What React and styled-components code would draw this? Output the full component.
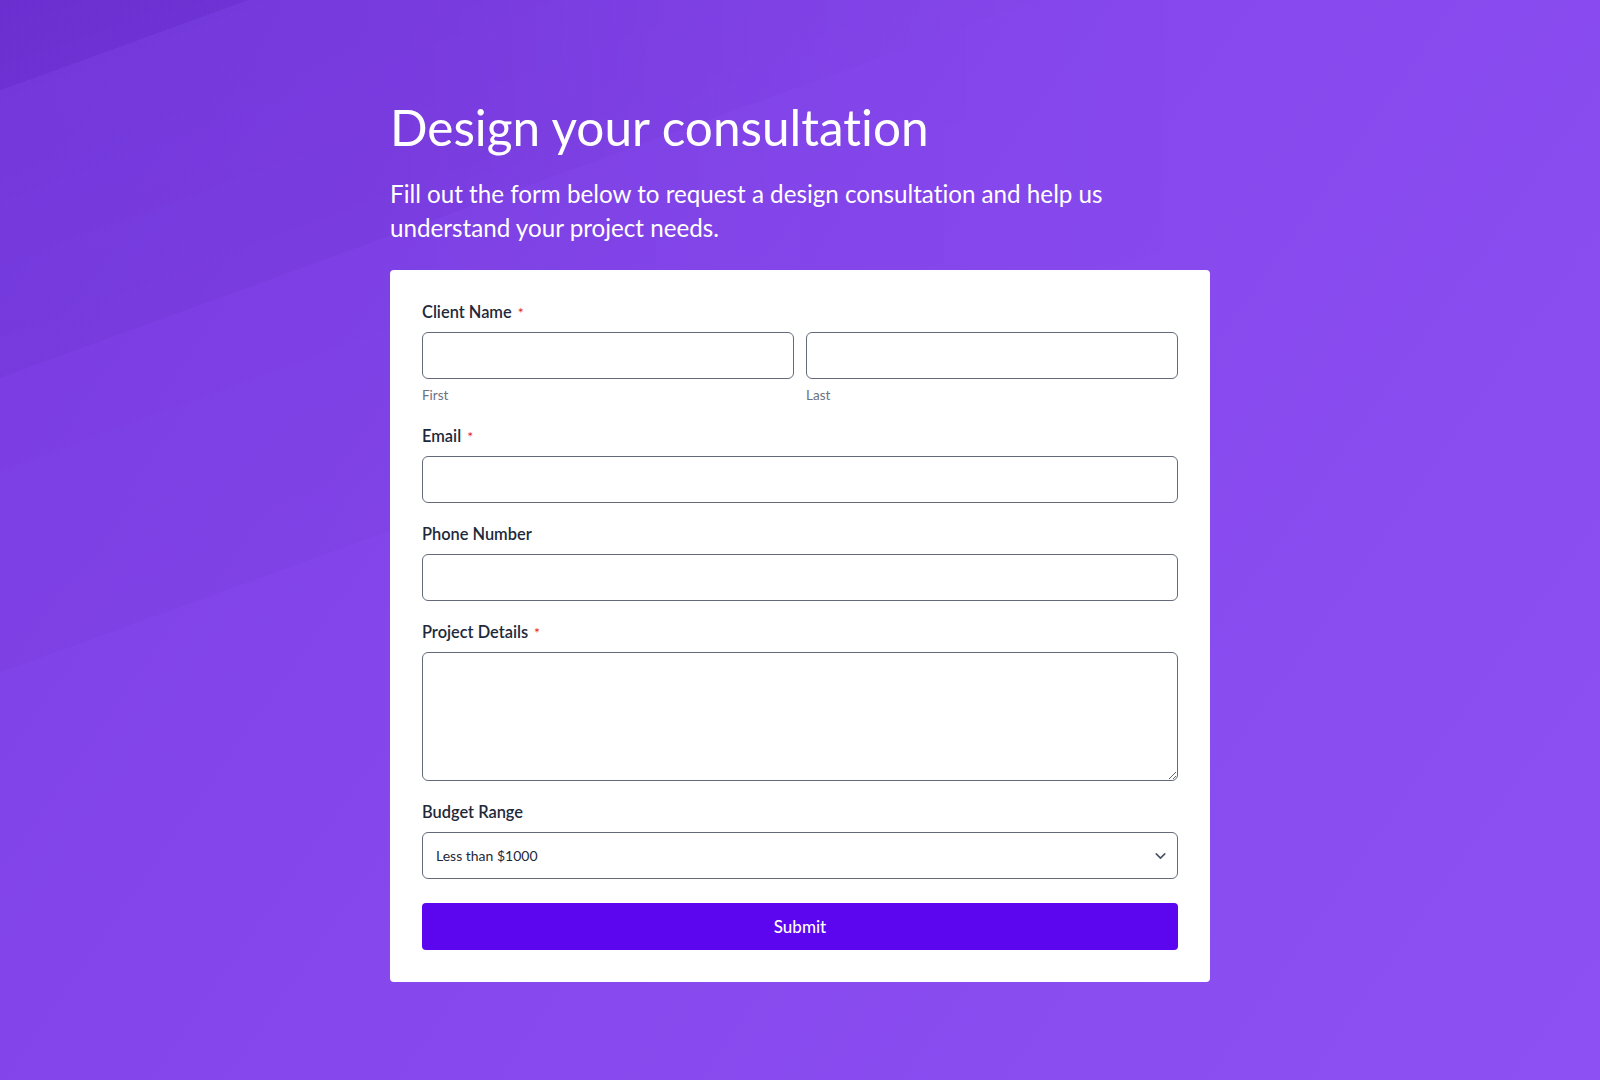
import styled, { createGlobalStyle } from 'styled-components';
import { ChevronDown } from 'lucide-react';

const GlobalStyle = createGlobalStyle`
    html, body {
        margin: 0;
        padding: 0;
    }
    body {
        font-family: 'Lato', 'Noto Sans', sans-serif;
        font-variant-ligatures: none;
        -webkit-font-smoothing: antialiased;
    }
    * {
        box-sizing: border-box;
    }
`;

const Page = styled.div`
    position: relative;
    min-height: 100vh;
    display: flex;
    flex-direction: column;
    align-items: center;
    padding: 98px 16px 80px;
    background: linear-gradient(125deg, #7b3fe4 0%, #8648ec 45%, #8c50f3 100%);

    &::before {
        content: '';
        position: absolute;
        inset: 0;
        pointer-events: none;
        background:
            linear-gradient(160deg, rgba(70, 10, 160, 0.18) 0, rgba(70, 10, 160, 0.14) 85px, transparent 85px),
            linear-gradient(160deg, rgba(70, 10, 160, 0.09) 0, rgba(70, 10, 160, 0.07) 355px, transparent 355px),
            linear-gradient(160deg, rgba(70, 10, 160, 0.06) 0, rgba(70, 10, 160, 0.04) 632px, transparent 632px);
        -webkit-mask-image: linear-gradient(to right, #000 0%, #000 25%, transparent 75%);
        mask-image: linear-gradient(to right, #000 0%, #000 25%, transparent 75%);
    }
`;

const Container = styled.div`
    position: relative;
    width: 820px;
    max-width: 100%;
`;

const Heading = styled.h1`
    margin: 0;
    font-size: 49.5px;
    line-height: 1.2;
    font-weight: 400;
    color: #ffffff;
`;

const Intro = styled.p`
    margin: 20px 0 25px;
    max-width: 760px;
    font-size: 24.2px;
    line-height: 34px;
    color: #ffffff;
`;

const Card = styled.form`
    background: #ffffff;
    border-radius: 4px;
    padding: 32px 32px 32px;
    display: flex;
    flex-direction: column;
`;

const Field = styled.div`
    display: flex;
    flex-direction: column;
    margin-bottom: ${(p) => p.$gap || 21}px;
`;

const Label = styled.label`
    display: block;
    font-size: 16.4px;
    line-height: 20px;
    font-weight: 600;
    color: #1e293b;
    margin-bottom: 10px;
`;

const Required = styled.span`
    color: #dc2626;
    font-size: 14px;
    line-height: 1;
    font-weight: 400;
    margin-left: 6px;
`;

const Row = styled.div`
    display: grid;
    grid-template-columns: 1fr 1fr;
    gap: 12px;
`;

const Part = styled.div`
    display: flex;
    flex-direction: column;
`;

const SubLabel = styled.span`
    margin-top: 7px;
    font-size: 13.5px;
    line-height: 18px;
    color: #6b7280;
`;

const Input = styled.input`
    width: 100%;
    height: 47px;
    border: 1px solid #646b78;
    border-radius: 6px;
    padding: 0 13px;
    font-family: inherit;
    font-size: 14px;
    color: #1e293b;
    background: #ffffff;
    outline: none;
`;

const TextArea = styled.textarea`
    width: 100%;
    height: 129px;
    border: 1px solid #646b78;
    border-radius: 6px;
    padding: 12px 13px;
    font-family: inherit;
    font-size: 14px;
    color: #1e293b;
    display: block;
    outline: none;
`;

const SelectWrap = styled.div`
    position: relative;

    svg {
        position: absolute;
        right: 9px;
        top: 50%;
        transform: translateY(-50%);
        color: #4b5563;
        pointer-events: none;
    }
`;

const Select = styled.select`
    width: 100%;
    height: 47px;
    appearance: none;
    border: 1px solid #646b78;
    border-radius: 6px;
    padding: 0 36px 0 13px;
    font-family: inherit;
    font-size: 14px;
    color: #1e293b;
    background: #ffffff;
    outline: none;
`;

const SubmitButton = styled.button`
    margin-top: 3px;
    height: 47px;
    width: 100%;
    border: none;
    border-radius: 4px;
    background: #5c05ef;
    color: #ffffff;
    font-family: inherit;
    font-size: 17px;
    font-weight: 500;
    cursor: pointer;
`;

export default function App() {
    return (
        <>
            <GlobalStyle />
            <Page>
                <Container>
                    <Heading>Design your consultation</Heading>
                    <Intro>
                        Fill out the form below to request a design consultation and help us understand your project needs.
                    </Intro>
                    <Card onSubmit={(e) => e.preventDefault()}>
                        <Field $gap={22}>
                            <Label>
                                Client Name<Required>*</Required>
                            </Label>
                            <Row>
                                <Part>
                                    <Input type="text" />
                                    <SubLabel>First</SubLabel>
                                </Part>
                                <Part>
                                    <Input type="text" />
                                    <SubLabel>Last</SubLabel>
                                </Part>
                            </Row>
                        </Field>
                        <Field>
                            <Label>
                                Email<Required>*</Required>
                            </Label>
                            <Input type="email" />
                        </Field>
                        <Field>
                            <Label>Phone Number</Label>
                            <Input type="tel" />
                        </Field>
                        <Field>
                            <Label>
                                Project Details<Required>*</Required>
                            </Label>
                            <TextArea />
                        </Field>
                        <Field>
                            <Label>Budget Range</Label>
                            <SelectWrap>
                                <Select defaultValue="lt1000">
                                    <option value="lt1000">Less than $1000</option>
                                    <option value="1000-5000">$1000 - $5000</option>
                                    <option value="5000-10000">$5000 - $10000</option>
                                    <option value="gt10000">More than $10000</option>
                                </Select>
                                <ChevronDown size={17} strokeWidth={2.3} />
                            </SelectWrap>
                        </Field>
                        <SubmitButton type="submit">Submit</SubmitButton>
                    </Card>
                </Container>
            </Page>
        </>
    );
}
